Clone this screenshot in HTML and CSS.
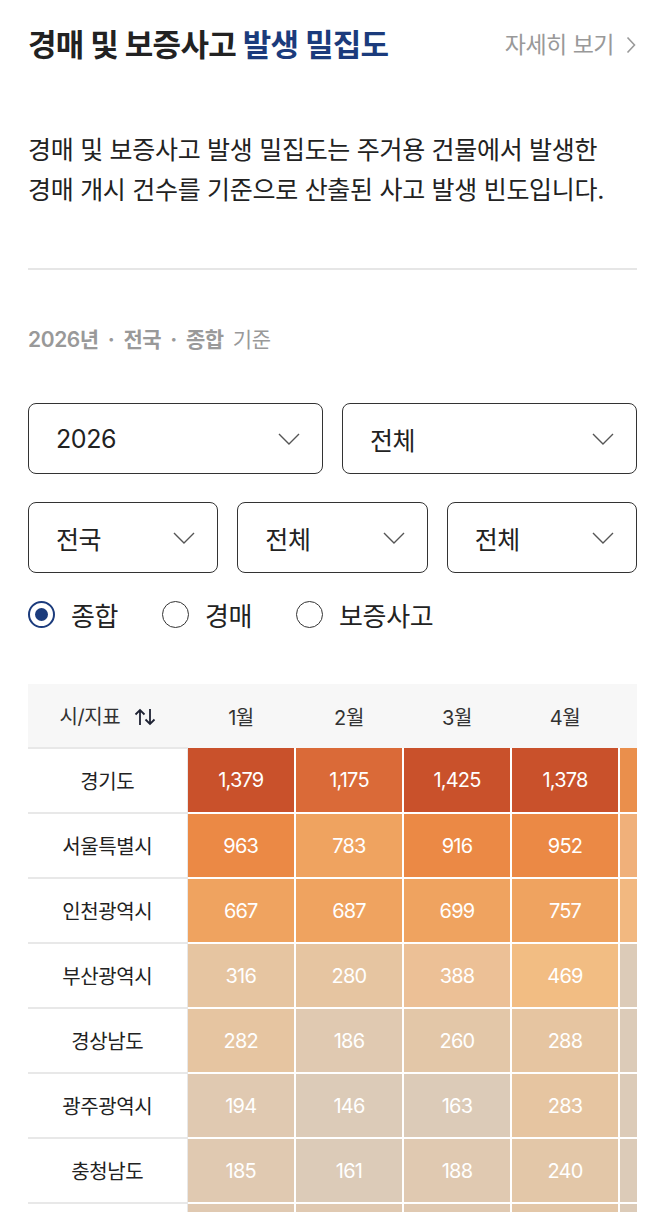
FILE: index.html
```html
<!DOCTYPE html>
<html lang="ko">
<head>
<meta charset="utf-8">
<title>경매 및 보증사고 발생 밀집도</title>
<link rel="stylesheet" href="styles.css">
</head>
<body>
<main class="page">
  <header class="head">
    <h1 class="title">경매 및 보증사고 <span class="accent">발생 밀집도</span></h1>
    <a class="more" href="#">자세히 보기
      <svg class="more-ico" width="10" height="18" viewBox="0 0 10 18"><path d="M1.5 1.5 L8.5 9 L1.5 16.5" fill="none" stroke="#999" stroke-width="1.6"/></svg>
    </a>
  </header>

  <p class="desc">경매 및 보증사고 발생 밀집도는 주거용 건물에서 발생한<br>경매 개시 건수를 기준으로 산출된 사고 발생 빈도입니다.</p>

  <hr class="divider">

  <p class="basis"><b>2026년</b><span class="dot">·</span><b>전국</b><span class="dot">·</span><b>종합</b><span class="std">기준</span></p>

  <div class="selects two">
    <div class="select"><span>2026</span><svg class="chev" width="22" height="12" viewBox="0 0 22 12"><path d="M1 1 L11 11 L21 1" fill="none" stroke="#555" stroke-width="1.4"/></svg></div>
    <div class="select"><span>전체</span><svg class="chev" width="22" height="12" viewBox="0 0 22 12"><path d="M1 1 L11 11 L21 1" fill="none" stroke="#555" stroke-width="1.4"/></svg></div>
  </div>
  <div class="selects three">
    <div class="select"><span>전국</span><svg class="chev" width="22" height="12" viewBox="0 0 22 12"><path d="M1 1 L11 11 L21 1" fill="none" stroke="#555" stroke-width="1.4"/></svg></div>
    <div class="select"><span>전체</span><svg class="chev" width="22" height="12" viewBox="0 0 22 12"><path d="M1 1 L11 11 L21 1" fill="none" stroke="#555" stroke-width="1.4"/></svg></div>
    <div class="select"><span>전체</span><svg class="chev" width="22" height="12" viewBox="0 0 22 12"><path d="M1 1 L11 11 L21 1" fill="none" stroke="#555" stroke-width="1.4"/></svg></div>
  </div>

  <div class="radios">
    <label class="radio on"><span class="circle"></span>종합</label>
    <label class="radio"><span class="circle"></span>경매</label>
    <label class="radio"><span class="circle"></span>보증사고</label>
  </div>

  <div class="table-wrap">
    <table class="heat">
      <thead>
        <tr>
          <th class="label">시/지표
            <svg class="sort" width="22" height="20" viewBox="0 0 22 20"><path d="M6 18 V3 M1.5 7.5 L6 3 L10.5 7.5" fill="none" stroke="#1e2233" stroke-width="1.8"/><path d="M16 2 V17 M11.5 12.5 L16 17 L20.5 12.5" fill="none" stroke="#1e2233" stroke-width="1.8"/></svg>
          </th>
          <th>1월</th><th>2월</th><th>3월</th><th>4월</th><th>5월</th><th>6월</th><th>7월</th><th>8월</th><th>9월</th><th>10월</th><th>11월</th><th>12월</th>
        </tr>
      </thead>
      <tbody>
        <tr><th class="label">경기도</th><td class="l9">1,379</td><td class="l8">1,175</td><td class="l9">1,425</td><td class="l9">1,378</td><td class="l7b">1,012</td><td class="l8">1,204</td><td class="l7">988</td><td class="l8">1,150</td><td class="l9">1,301</td><td class="l8">1,122</td><td class="l7">976</td><td class="l8">1,098</td></tr>
        <tr><th class="label">서울특별시</th><td class="l7">963</td><td class="l6">783</td><td class="l7">916</td><td class="l7">952</td><td class="l5b">598</td><td class="l6">712</td><td class="l6">744</td><td class="l7">901</td><td class="l6">802</td><td class="l6">766</td><td class="l6">731</td><td class="l7">880</td></tr>
        <tr><th class="label">인천광역시</th><td class="l6">667</td><td class="l6">687</td><td class="l6">699</td><td class="l6">757</td><td class="l5c">541</td><td class="l6">655</td><td class="l5c">560</td><td class="l6">640</td><td class="l6">702</td><td class="l5c">577</td><td class="l6">612</td><td class="l6">689</td></tr>
        <tr><th class="label">부산광역시</th><td class="l3">316</td><td class="l3">280</td><td class="l4">388</td><td class="l5">469</td><td class="l0">155</td><td class="l3">301</td><td class="l3">322</td><td class="l4">356</td><td class="l3">297</td><td class="l3">310</td><td class="l4">341</td><td class="l3">289</td></tr>
        <tr><th class="label">경상남도</th><td class="l3">282</td><td class="l1">186</td><td class="l2">260</td><td class="l3">288</td><td class="l0">149</td><td class="l2">231</td><td class="l2">244</td><td class="l3">270</td><td class="l2">255</td><td class="l1">199</td><td class="l2">238</td><td class="l2">262</td></tr>
        <tr><th class="label">광주광역시</th><td class="l1">194</td><td class="l0">146</td><td class="l0">163</td><td class="l3">283</td><td class="l0">138</td><td class="l1">177</td><td class="l1">190</td><td class="l0">158</td><td class="l1">182</td><td class="l1">201</td><td class="l0">166</td><td class="l1">175</td></tr>
        <tr><th class="label">충청남도</th><td class="l1">185</td><td class="l0">161</td><td class="l1">188</td><td class="l2">240</td><td class="l0">132</td><td class="l1">179</td><td class="l1">193</td><td class="l0">168</td><td class="l1">184</td><td class="l2">212</td><td class="l1">176</td><td class="l1">189</td></tr>
        <tr><th class="label">대구광역시</th><td class="l1">181</td><td class="l1">178</td><td class="l1">196</td><td class="l2">226</td><td class="l0">128</td><td class="l1">172</td><td class="l1">185</td><td class="l0">160</td><td class="l1">179</td><td class="l1">198</td><td class="l0">164</td><td class="l1">183</td></tr>
      </tbody>
    </table>
  </div>
</main>
</body>
</html>
```

FILE: styles.css
```css
* { box-sizing: border-box; }
html, body { margin: 0; padding: 0; background: #fff; }
body {
  font-family: Inter, "Noto Sans CJK KR", sans-serif;
  color: #222;
  letter-spacing: -0.4px;
}
.page { padding: 0 29px 0 28px; }

.head {
  display: flex;
  align-items: center;
  justify-content: space-between;
  padding-top: 27px;
  height: 63px;
}
.title {
  margin: 0;
  font-size: 31px;
  line-height: 36px;
  font-weight: 700;
  color: #222;
  letter-spacing: -0.7px;
}
.accent { color: #1b3b7c; }
.more {
  display: flex;
  align-items: center;
  gap: 12px;
  color: #999;
  text-decoration: none;
  font-size: 23px;
  line-height: 36px;
  letter-spacing: -0.5px;
}
.more-ico { display: block; margin-right: 1px; }

.desc {
  margin: 67px 0 0;
  font-size: 25px;
  line-height: 40px;
  color: #222;
  letter-spacing: -0.3px;
}
.divider {
  margin: 58px 0 0;
  border: 0;
  height: 2px;
  background: #e6e6e6;
}
.basis {
  margin: 58px 0 0;
  font-size: 21px;
  line-height: 24px;
  color: #999;
  letter-spacing: -0.4px;
}
.basis b { font-weight: 600; }
.basis .dot { margin: 0 9px; font-weight: 700; }
.basis .std { margin-left: 9px; }

.selects {
  display: grid;
  gap: 19px;
}
.selects.two { grid-template-columns: 1fr 1fr; margin-top: 51px; }
.selects.three { grid-template-columns: 1fr 1fr 1fr; margin-top: 28px; }
.select {
  height: 71px;
  border: 1px solid #333;
  border-radius: 8px;
  display: flex;
  align-items: center;
  justify-content: space-between;
  padding: 0 22px 0 27px;
  font-size: 25px;
  color: #222;
}
.chev { display: block; }

.radios {
  display: flex;
  align-items: center;
  margin-top: 27px;
  height: 28px;
  gap: 44px;
}
.radio {
  display: flex;
  align-items: center;
  gap: 16px;
  font-size: 26px;
  color: #222;
}
.circle {
  width: 27px;
  height: 27px;
  border-radius: 50%;
  border: 1.5px solid #333;
  display: flex;
  align-items: center;
  justify-content: center;
}
.radio.on .circle { border: 2px solid #1b3b7c; }
.radio.on .circle::after {
  content: "";
  width: 13px;
  height: 13px;
  border-radius: 50%;
  background: #1b3b7c;
}

.table-wrap {
  margin-top: 56px;
  overflow-x: auto;
  scrollbar-width: none;
}
.table-wrap::-webkit-scrollbar { display: none; }
.heat {
  border-collapse: collapse;
  table-layout: fixed;
  font-size: 20px;
}
.heat thead th {
  background: #f7f7f7;
  height: 64px;
  font-weight: 400;
  color: #333;
  width: 108px;
  min-width: 108px;
  padding: 0;
  text-align: center;
}
.heat thead th.label {
  width: 159px;
  min-width: 159px;
  border-bottom: 2px solid #e8e8e8;
}
.heat thead th.label .sort { vertical-align: -3px; margin-left: 8px; }
.heat tbody th.label {
  width: 159px;
  height: 65px;
  font-weight: 400;
  color: #222;
  background: #fff;
  border-bottom: 2px solid #e8e8e8;
  border-right: 1px solid #e8e8e8;
  padding: 0;
  text-align: center;
}
.heat td {
  height: 65px;
  padding: 0;
  text-align: center;
  color: #fff;
  border-right: 2px solid #fff;
  border-bottom: 2px solid #fff;
  letter-spacing: -0.8px;
}
.l9 { background: #c9512b; }
.l8 { background: #da6a38; }
.l7 { background: #eb8945; }
.l7b { background: #ea8f4c; }
.l6 { background: #efa360; }
.l5b { background: #f0b07a; }
.l5c { background: #f2b880; }
.l5 { background: #f2bd83; }
.l4 { background: #ecc096; }
.l3 { background: #e6c5a1; }
.l2 { background: #e3c7a8; }
.l1 { background: #e0c9b1; }
.l0 { background: #dccbb8; }
```
